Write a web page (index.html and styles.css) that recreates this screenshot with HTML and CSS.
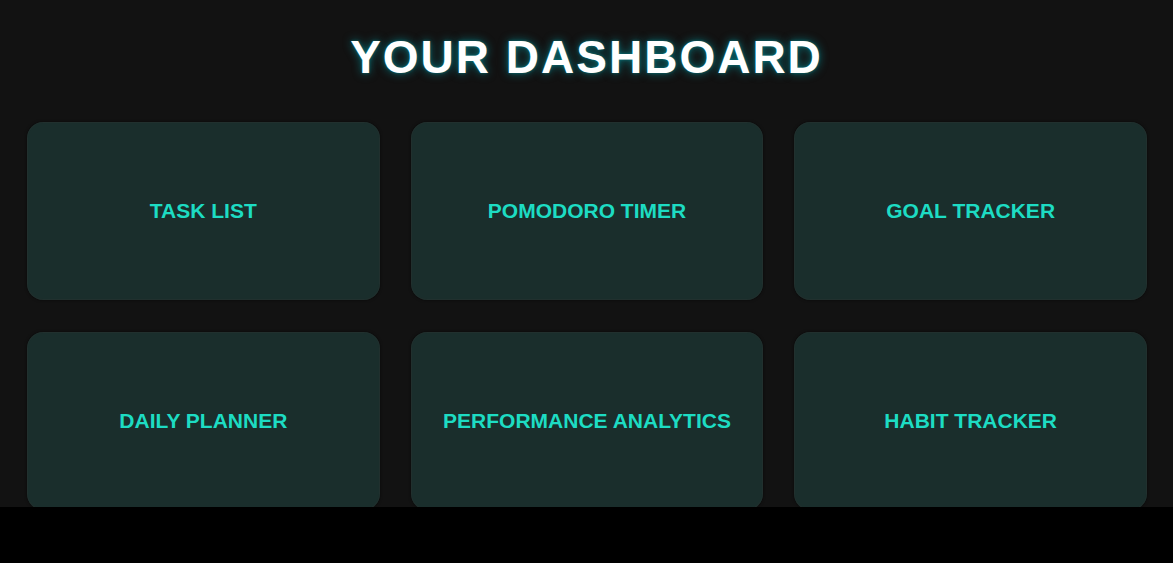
FILE: index.html
```html
<!DOCTYPE html>
<html lang="en">
<head>
<meta charset="utf-8">
<title>Your Dashboard</title>
<link rel="stylesheet" href="styles.css">
</head>
<body>
<div class="page">
  <h1 class="title">YOUR DASHBOARD</h1>
  <div class="grid">
    <div class="card"><span>TASK LIST</span></div>
    <div class="card"><span>POMODORO TIMER</span></div>
    <div class="card"><span>GOAL TRACKER</span></div>
    <div class="card"><span>DAILY PLANNER</span></div>
    <div class="card"><span>PERFORMANCE ANALYTICS</span></div>
    <div class="card"><span>HABIT TRACKER</span></div>
  </div>
</div>
</body>
</html>
```

FILE: styles.css
```css
html, body {
  margin: 0;
  padding: 0;
  background: #000;
}
.page {
  height: 507px;
  overflow: hidden;
  background: #121212;
  font-family: "Liberation Sans", Arial, sans-serif;
}
.title {
  margin: 0;
  padding-top: 31px;
  height: 91px;
  box-sizing: border-box;
  text-align: center;
  font-size: 46px;
  font-weight: 700;
  letter-spacing: 2px;
  line-height: 52px;
  color: #fff;
  text-shadow: 0 0 10px rgba(0, 180, 190, 0.6), 0 0 3px rgba(0, 160, 170, 0.5);
}
.grid {
  display: grid;
  grid-template-columns: repeat(3, 1fr);
  column-gap: 31px;
  row-gap: 32px;
  padding: 31px 26px 0 27px;
}
.card {
  height: 178px;
  border-radius: 16px;
  background: #1a2e2c;
  box-shadow: 0 0 3px rgba(0, 0, 0, 0.6), inset 0 0 0 1px rgba(40, 50, 48, 0.5);
  display: flex;
  align-items: center;
  justify-content: center;
  color: #1ddcc3;
  font-size: 21px;
  font-weight: 700;
}
```
